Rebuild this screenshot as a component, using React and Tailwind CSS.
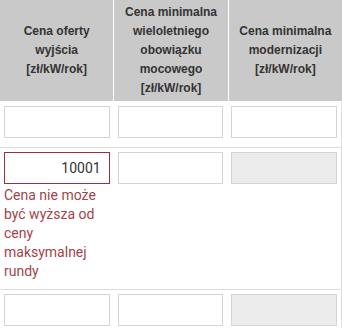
import React from "react";

const headers = [
  ["Cena oferty", "wyjścia", "[zł/kW/rok]"],
  ["Cena minimalna", "wieloletniego", "obowiązku", "mocowego", "[zł/kW/rok]"],
  ["Cena minimalna", "modernizacji", "[zł/kW/rok]"],
];

function Field({ value = "", invalid = false, disabled = false }) {
  return (
    <input
      type="text"
      readOnly
      value={value}
      disabled={disabled}
      className={`block h-[32px] w-full border px-[8px] text-right text-[14px] text-[#333] outline-none ${
        invalid
          ? "border-[#98303f] bg-white"
          : disabled
          ? "border-[#d4d4d4] bg-[#ececec]"
          : "border-[#d4d4d4] bg-white"
      }`}
      style={{ fontFamily: "Roboto, sans-serif" }}
    />
  );
}

function Row({ children }) {
  return (
    <div className="grid grid-cols-3 border-b border-r border-[#dcdcdc]">
      {children}
    </div>
  );
}

function Cell({ children }) {
  return <div className="px-[4px] pt-[4px] pb-[9px]">{children}</div>;
}

export default function App() {
  return (
    <div className="w-[342px] h-[328px] overflow-hidden bg-white">
      <div className="grid grid-cols-3 gap-x-px bg-white pb-[1px]">
        {headers.map((lines, i) => (
          <div
            key={i}
            className="flex h-[101px] flex-col items-center justify-center bg-[#c9c9c9] text-center text-[12px] font-bold leading-[19px] text-[#333]"
            style={{ fontFamily: "'Liberation Sans', Arial, sans-serif" }}
          >
            {lines.map((l) => (
              <span key={l}>{l}</span>
            ))}
          </div>
        ))}
      </div>

      <Row>
        <Cell>
          <Field />
        </Cell>
        <Cell>
          <Field />
        </Cell>
        <Cell>
          <Field />
        </Cell>
      </Row>

      <Row>
        <Cell>
          <Field value="10001" invalid />
          <p
            className="mt-[2px] -mb-[1px] text-[14px] leading-[19px] text-[#a4434a]"
            style={{ fontFamily: "Roboto, sans-serif" }}
          >
            Cena nie może być wyższa od ceny maksymalnej rundy
          </p>
        </Cell>
        <Cell>
          <Field />
        </Cell>
        <Cell>
          <Field disabled />
        </Cell>
      </Row>

      <Row>
        <Cell>
          <Field />
        </Cell>
        <Cell>
          <Field />
        </Cell>
        <Cell>
          <Field disabled />
        </Cell>
      </Row>
    </div>
  );
}
